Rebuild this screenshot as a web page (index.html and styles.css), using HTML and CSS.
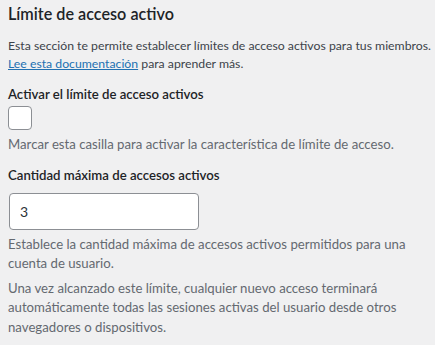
FILE: index.html
```html
<html>
<head>
<meta charset="UTF-8">
<link rel="stylesheet" href="styles.css">
</head>
<body>
<div id="settings_section">
    <h2 class="section-title">Límite de acceso activo</h2>
    <p class="intro">Esta sección te permite establecer límites de acceso activos para tus miembros.<br>
        <a href="#">Lee esta documentación</a> para aprender más.</p>

    <div class="field">
        <label class="field-label" for="limit_enabled">Activar el límite de acceso activos</label>
        <input type="checkbox" id="limit_enabled" class="check">
        <p class="description">Marcar esta casilla para activar la característica de límite de acceso.</p>
    </div>

    <div class="field">
        <label class="field-label" for="limit_count">Cantidad máxima de accesos activos</label>
        <input type="text" id="limit_count" class="text-input" value="3">
        <p class="description">Establece la cantidad máxima de accesos activos permitidos para una cuenta de usuario.</p>
        <p class="description">Una vez alcanzado este límite, cualquier nuevo acceso terminará automáticamente todas las sesiones activas del usuario desde otros navegadores o dispositivos.</p>
    </div>
</div>
</body>
</html>
```

FILE: styles.css
```css
body {
    margin: 0;
    background: #f0f0f1;
    color: #1d2327;
    font-family: Lato, "Noto Sans", sans-serif;
}

#settings_section {
    padding: 0 8px;
}

.section-title {
    font-size: 16.2px;
    font-weight: 600;
    line-height: 22px;
    margin: 3px 0 0 0;
}

.intro {
    font-size: 12.25px;
    line-height: 17.5px;
    margin: 12px -8px 0 0;
    white-space: nowrap;
    color: #3c434a;
}

.intro a {
    color: #2271b1;
}

.field {
    margin-top: 12px;
}

.field + .field {
    margin-top: 10px;
}

.field-label {
    display: block;
    font-size: 13.2px;
    font-weight: 600;
    line-height: 20px;
}

.check {
    appearance: none;
    display: block;
    width: 24px;
    height: 24px;
    margin: 2px 0 0 0;
    background: #fff;
    border: 1px solid #8c8f94;
    border-radius: 4px;
    box-sizing: border-box;
}

.text-input {
    display: block;
    width: 190px;
    height: 37px;
    margin: 8px 0 0 1px;
    padding: 0 10px;
    box-sizing: border-box;
    background: #fff;
    border: 1px solid #8c8f94;
    border-radius: 4px;
    font-family: inherit;
    font-size: 14px;
    color: #2c3338;
}

.description {
    font-size: 13.2px;
    line-height: 19.5px;
    color: #646970;
    margin: 5px 0 0 0;
}
```
